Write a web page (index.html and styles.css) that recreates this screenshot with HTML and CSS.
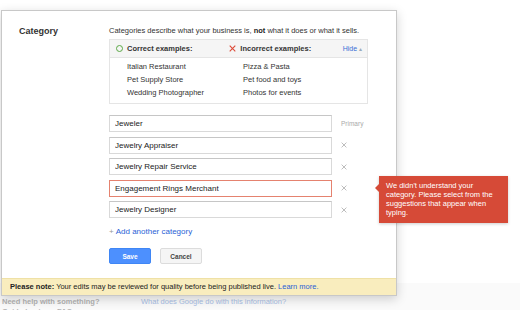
FILE: index.html
```html
<!DOCTYPE html>
<html lang="en">
<head>
  <meta charset="UTF-8" />
  <title>Edit category</title>
  <link rel="stylesheet" href="styles.css">
</head>
<body>

  <div class="dialog">
    <div class="dialog-body">
      <div class="field-label">Category</div>

      <div class="field">
        <p class="hint">Categories describe what your business is, <b>not</b> what it does or what it sells.</p>

        <div class="examples">
          <div class="examples-head">
            <div class="head-cell"><span class="ok-icon"></span>Correct examples:</div>
            <div class="head-cell">
              <svg class="bad-icon" viewBox="0 0 10 10" width="7" height="7"><path d="M1 1L9 9M9 1L1 9" stroke="#dd4b39" stroke-width="1.6"/></svg>
              Incorrect examples:
            </div>
            <a class="hide-link" href="#">Hide <span class="caret">&#x25B4;</span></a>
          </div>
          <div class="examples-list">
            <span>Italian Restaurant</span>
            <span>Pizza &amp; Pasta</span>
            <span>Pet Supply Store</span>
            <span>Pet food and toys</span>
            <span>Wedding Photographer</span>
            <span>Photos for events</span>
          </div>
        </div>

        <div class="cat-list">
          <div class="cat-row">
            <input type="text" value="Jeweler" />
            <span class="primary">Primary</span>
          </div>
          <div class="cat-row">
            <input type="text" value="Jewelry Appraiser" />
            <svg class="remove" viewBox="0 0 10 10" width="6" height="6"><path d="M1 1L9 9M9 1L1 9" stroke="#b0b0b0" stroke-width="1.4"/></svg>
          </div>
          <div class="cat-row">
            <input type="text" value="Jewelry Repair Service" />
            <svg class="remove" viewBox="0 0 10 10" width="6" height="6"><path d="M1 1L9 9M9 1L1 9" stroke="#b0b0b0" stroke-width="1.4"/></svg>
          </div>
          <div class="cat-row">
            <input type="text" class="error" value="Engagement Rings Merchant" />
            <svg class="remove" viewBox="0 0 10 10" width="6" height="6"><path d="M1 1L9 9M9 1L1 9" stroke="#b0b0b0" stroke-width="1.4"/></svg>
            <div class="error-tip">We didn't understand your category. Please select from the suggestions that appear when typing.</div>
          </div>
          <div class="cat-row">
            <input type="text" value="Jewelry Designer" />
            <svg class="remove" viewBox="0 0 10 10" width="6" height="6"><path d="M1 1L9 9M9 1L1 9" stroke="#b0b0b0" stroke-width="1.4"/></svg>
          </div>
        </div>

        <a class="add-link" href="#"><span class="plus">+</span>Add another category</a>

        <div class="actions">
          <button class="btn btn-save">Save</button>
          <button class="btn btn-cancel">Cancel</button>
        </div>
      </div>
    </div>

    <div class="note">
      <b>Please note:</b> Your edits may be reviewed for quality before being published live. <a href="#">Learn more.</a>
    </div>
  </div>

  <div class="footer">
    <div class="footer-row">
      <span class="help">Need help with something?</span>
      <a href="#">What does Google do with this information?</a>
    </div>
    <div class="footer-row">
      <span class="help">Get help at our FAQ</span>
    </div>
  </div>

</body>
</html>
```

FILE: styles.css
```css
body {
  margin: 0;
  background: #fff;
  font-family: "Liberation Sans", Arial, sans-serif;
  font-size: 7.5px;
  color: #333;
}

a {
  color: #1155cc;
  text-decoration: none;
}

.dialog {
  position: relative;
  z-index: 1;
  width: 394px;
  margin: 10px 0 0 1px;
  background: #fff;
  border: 1px solid #c8c8c8;
  box-shadow: 0 3px 10px rgba(0, 0, 0, 0.18);
}

.dialog-body {
  display: flex;
  padding: 15px 0 14px 17px;
}

.field-label {
  width: 90px;
  font-size: 9px;
  font-weight: bold;
  color: #333;
  line-height: 10px;
}

.field {
  width: 259px;
}

.hint {
  margin: 0 0 3px;
  line-height: 10px;
  color: #333;
}

.hint b {
  color: #222;
}

/* examples box */
.examples {
  border: 1px solid #e5e5e5;
}

.examples-head {
  display: flex;
  align-items: center;
  height: 17px;
  padding-left: 6px;
  background: #f5f5f5;
  border-bottom: 1px solid #e5e5e5;
  font-weight: bold;
  color: #333;
}

.head-cell {
  display: flex;
  align-items: center;
  width: 116px;
}

.ok-icon {
  box-sizing: border-box;
  width: 7px;
  height: 7px;
  margin-right: 4px;
  border: 1.5px solid #5aa845;
  border-radius: 50%;
}

.bad-icon {
  margin-right: 4px;
}

.hide-link {
  margin-left: auto;
  margin-right: 5px;
  white-space: nowrap;
  font-weight: normal;
  font-size: 7px;
  color: #3b6fd6;
}

.caret {
  color: #9ab;
  font-size: 6px;
}

.examples-list {
  display: grid;
  grid-template-columns: 116px 1fr;
  padding: 2px 0 4px 17px;
  line-height: 13px;
  color: #333;
}

/* category inputs */
.cat-list {
  display: flex;
  flex-direction: column;
  gap: 4.5px;
  margin-top: 11px;
}

.cat-row {
  position: relative;
  display: flex;
  align-items: center;
}

.cat-row input {
  box-sizing: border-box;
  width: 223px;
  height: 17px;
  margin: 0;
  padding: 0 5px;
  border: 1px solid #d9d9d9;
  border-top-color: #c6c6c6;
  border-radius: 0;
  font-family: "Liberation Sans", Arial, sans-serif;
  font-size: 8px;
  color: #222;
  outline: none;
}

.cat-row input.error {
  border-color: #e5826f;
}

.primary {
  margin-left: 9px;
  font-size: 6.5px;
  color: #aaa;
}

.remove {
  margin-left: 9px;
}

.error-tip {
  position: absolute;
  left: 270px;
  top: -4px;
  width: 115px;
  padding: 5px 7px 6px;
  background: #d64a37;
  color: #fff;
  line-height: 9px;
  box-shadow: 0 1px 3px rgba(0, 0, 0, 0.2);
}

.error-tip::before {
  content: "";
  position: absolute;
  left: -4px;
  top: 8px;
  border-style: solid;
  border-width: 4px 4px 4px 0;
  border-color: transparent #d64a37 transparent transparent;
}

.add-link {
  display: block;
  margin-top: 9px;
  line-height: 10px;
  font-size: 8px;
  color: #2a5fd6;
}

.plus {
  margin-right: 2px;
  color: #999;
}

.actions {
  display: flex;
  gap: 9px;
  margin-top: 11px;
}

.btn {
  box-sizing: border-box;
  width: 42px;
  height: 16px;
  padding: 0;
  border-radius: 2px;
  font-family: "Liberation Sans", Arial, sans-serif;
  font-size: 6.5px;
  font-weight: bold;
}

.btn-save {
  background: #4d90fe;
  border: 1px solid #3f86f5;
  color: #fff;
}

.btn-cancel {
  background: #f5f5f5;
  border: 1px solid #dcdcdc;
  color: #444;
}

/* note band */
.note {
  height: 16px;
  padding-left: 8px;
  line-height: 16px;
  background: #f9edbe;
  border-top: 1px solid #efe1a6;
  color: #222;
}

.note a {
  color: #2a5fd6;
}

/* page footer */
.footer {
  margin-top: -13px;
  padding: 14px 0 0 2px;
  background: #fafafa;
  height: 40px;
}

.footer-row {
  display: flex;
  line-height: 10px;
}

.help {
  width: 139px;
  font-weight: bold;
  color: #b3b3b3;
}

.footer a {
  color: #a9bfe6;
}
```
